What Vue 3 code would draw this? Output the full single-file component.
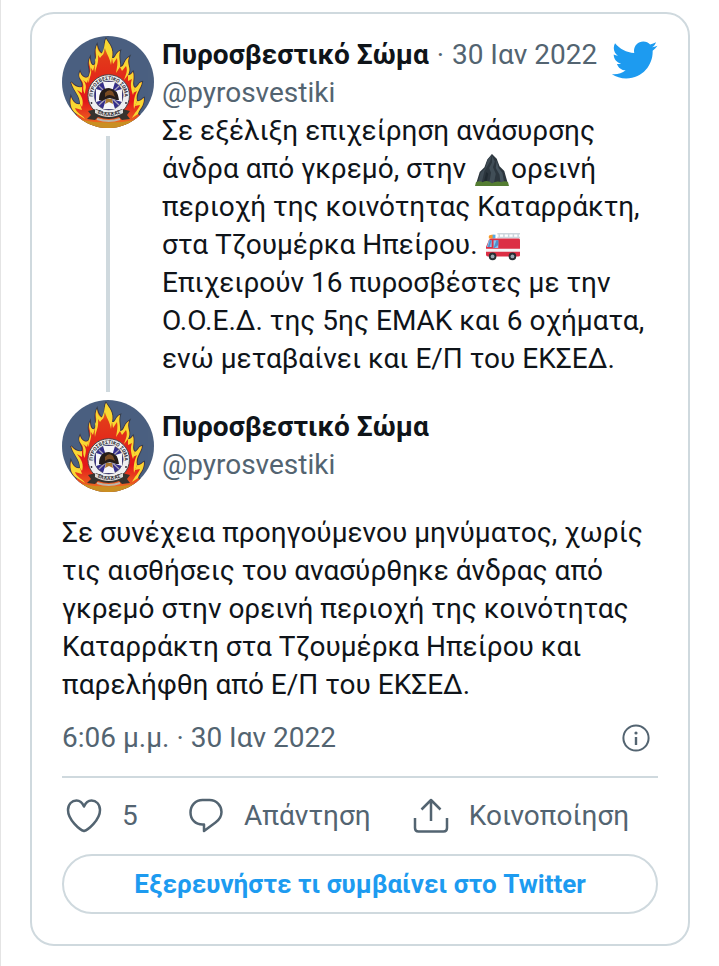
<script setup>
import { ref } from 'vue'

const liked = ref(false)
const likes = ref(5)

const author = {
  name: 'Πυροσβεστικό Σώμα',
  handle: '@pyrosvestiki'
}

function toggleLike() {
  liked.value = !liked.value
  likes.value += liked.value ? 1 : -1
}
</script>

<template>
  <main class="page">
    <!-- Shared avatar artwork -->
    <svg class="defs" aria-hidden="true">
      <defs>
        <linearGradient id="flame-red" x1="0" y1="0" x2="0" y2="1">
          <stop offset="0" stop-color="#f0a020" />
          <stop offset="0.2" stop-color="#e23a1a" />
          <stop offset="0.7" stop-color="#e3161a" />
          <stop offset="1" stop-color="#ef7a22" />
        </linearGradient>
        <path id="ring-top" d="M32.500 66.500A15.800 15.800 0 1 1 61 66.500" />
        <path id="ring-bottom" d="M34 74Q47 82 60 74" />
        <symbol id="avatar" viewBox="0 0 92 92">
          <rect width="92" height="92" fill="#4b6080" />
          <path
            d="M14 92C12 86 12 81 15 78C11 76 7 70 9 61C11 66 14 69 18 68C19 59 12 56 9 46C13 51 18 52 20 51C23 46 15 43 18 36C20 42 25 43 27 40C30 34 24 29 28 22C28 28 31 31 33 28C36 22 31 17 35 9C36 14 39 18 41 17C45 13 41 9 44 3C47 8 52 12 50 22C54 23 53 17 58 15C56 21 59 27 58 31C63 31 61 25 67 21C64 28 70 32 66 39C68 40 70 37 71 36C73 43 69 49 73 52C77 50 76 47 80 46C79 53 73 57 75 65C78 66 80 63 82 62C82 71 77 73 76 78C80 80 83 86 78 92Z"
            fill="#2b2420"
            stroke="#2b2420"
            stroke-width="2"
            opacity="0.55"
          />
          <path
            d="M14 92C12 86 12 81 15 78C11 76 7 70 9 61C11 66 14 69 18 68C19 59 12 56 9 46C13 51 18 52 20 51C23 46 15 43 18 36C20 42 25 43 27 40C30 34 24 29 28 22C28 28 31 31 33 28C36 22 31 17 35 9C36 14 39 18 41 17C45 13 41 9 44 3C47 8 52 12 50 22C54 23 53 17 58 15C56 21 59 27 58 31C63 31 61 25 67 21C64 28 70 32 66 39C68 40 70 37 71 36C73 43 69 49 73 52C77 50 76 47 80 46C79 53 73 57 75 65C78 66 80 63 82 62C82 71 77 73 76 78C80 80 83 86 78 92Z"
            fill="url(#flame-red)"
          />
          <g fill="#f8d832">
            <path d="M44 3C47 8 52 12 50 22L49 29C48 22 44 17 43 12C42 16 42 20 38 20C43 14 42 8 44 3Z" />
            <path d="M35 9C35 15 39 18 41 18L38 22L36 19C37 27 34 31 33 37C32 30 34 27 33 24C36 19 32 15 35 9Z" />
            <path d="M28 22C28 28 31 31 33 28L31 35L29 32C30 39 27 41 27 47C25 43 27 40 28 36C30 31 25 28 28 22Z" />
            <path d="M18 36C20 42 25 43 27 40L25 47L21 44C26 50 23 53 23 58C20 54 22 51 21 48C21 44 15 42 18 36Z" />
            <path d="M9 46C13 51 18 52 20 51L20 57L15 54C20 60 22 65 20 71L18 68C18 59 12 56 9 46Z" />
            <path d="M9 61C11 66 14 69 18 68L20 74L13 72C15 78 20 78 23 83L15 78C11 76 7 70 9 61Z" />
            <path d="M58 15C56 21 59 27 58 31L54 37C55 31 56 27 55 22L51 28L50 22C54 23 53 17 58 15Z" />
            <path d="M67 21C64 28 70 32 66 39L62 44C64 38 66 35 64 30L60 35L58 31C63 31 61 25 67 21Z" />
            <path d="M71 36C73 43 69 49 73 52L71 59C69 53 68 48 70 43L66 45L66 39C68 40 70 37 71 36Z" />
            <path d="M80 46C79 53 73 57 75 65L72 73C71 65 73 59 75 55L71 57L73 52C77 50 76 47 80 46Z" />
            <path d="M82 62C82 71 77 73 76 78L70 82C73 76 76 74 78 69L73 70L75 65C78 66 80 63 82 62Z" />
          </g>
          <path d="M14 83Q46 90 79 83L80 92H12Z" fill="#c98f22" />
          <circle cx="46.700" cy="59.500" r="20.800" fill="#eeeef0" stroke="#4d4548" stroke-width="1" />
          <circle cx="46.700" cy="59.500" r="14.500" fill="#352f8c" stroke="#55555d" stroke-width="0.600" />
          <path
            d="M41 46H53L50 56L60 53V66L50 63L53 73H41L44 63L34 66V53L44 56Z"
            fill="#f6f6f9"
          />
          <path d="M37 50L57 69M57 50L37 69" stroke="#aaa5b8" stroke-width="1.200" />
          <path d="M37 64Q37 52 47 52Q56 53 57 64L54 64Q47 60 40 65Z" fill="#241c19" />
          <path d="M43 57Q47 52 51 56L53 61Q47 57 43 61Z" fill="#7b4c22" />
          <path d="M44 63L43 68L47 66L51 68L50 63Z" fill="#a9772e" />
          <text font-family="Roboto, sans-serif" font-size="5" font-weight="700" fill="#2d2b33">
            <textPath href="#ring-top" startOffset="50%" text-anchor="middle">ΠΥΡΟΣΒΕΣΤΙΚΟ ΣΩΜΑ</textPath>
          </text>
          <circle cx="29.500" cy="67" r="0.900" fill="#25232a" />
          <circle cx="64" cy="67" r="0.900" fill="#25232a" />
          <path d="M26 75L34 73Q47 80 60 73L68 75L65 79L68 83L60 84L57 81Q47 85 36 81L33 84L25 83L29 79Z" fill="#37332e" />
          <path d="M33 73Q47 81 61 73L61 77Q47 85 33 77Z" fill="#dddcda" />
          <text font-family="Roboto, sans-serif" font-size="5" font-weight="700" fill="#2d2b33">
            <textPath href="#ring-bottom" startOffset="50%" text-anchor="middle" dominant-baseline="central">ΕΛΛΑΔΑΣ</textPath>
          </text>
          <path d="M35 83Q47 87 58 83" fill="none" stroke="#bcb6a9" stroke-width="2" />
        </symbol>
      </defs>
    </svg>

    <article class="card">
      <!-- Parent tweet -->
      <section class="parent">
        <div class="thread">
          <svg class="avatar" role="img" aria-label="Πυροσβεστικό Σώμα"><use href="#avatar" /></svg>
          <span class="thread-line"></span>
        </div>
        <div class="parent-body">
          <header class="parent-head">
            <div class="byline">
              <a class="name" href="#">{{ author.name }}</a>
              <span class="muted dot"> · </span>
              <a class="muted" href="#">30 Ιαν 2022</a>
            </div>
            <a class="bird" href="#" aria-label="Twitter">
              <svg viewBox="0 0 24 24" aria-hidden="true">
                <path
                  d="M23.643 4.937c-.835.37-1.732.62-2.675.733.962-.576 1.7-1.49 2.048-2.578-.9.534-1.897.922-2.958 1.13-.85-.904-2.06-1.47-3.4-1.47-2.572 0-4.658 2.086-4.658 4.66 0 .364.042.718.12 1.06-3.873-.195-7.304-2.05-9.602-4.868-.4.69-.63 1.49-.63 2.342 0 1.616.823 3.043 2.072 3.878-.764-.025-1.482-.234-2.11-.583v.06c0 2.257 1.605 4.14 3.737 4.568-.392.106-.803.162-1.227.162-.3 0-.593-.028-.877-.082.593 1.85 2.313 3.198 4.352 3.234-1.595 1.25-3.604 1.995-5.786 1.995-.376 0-.747-.022-1.112-.065 2.062 1.323 4.51 2.093 7.14 2.093 8.57 0 13.255-7.098 13.255-13.254 0-.2-.005-.402-.014-.602.91-.658 1.7-1.477 2.323-2.41z"
                />
              </svg>
            </a>
          </header>
          <a class="handle" href="#">{{ author.handle }}</a>
          <p class="text">
            Σε εξέλιξη επιχείρηση ανάσυρσης άνδρα από γκρεμό, στην
            <svg class="emoji" viewBox="0 0 36 36" role="img" aria-label="Βουνό">
              <path d="M1 33L5 20L10 15L13 7L18 1L23 6L26 14L31 19L35 33Z" fill="#2c363e" />
              <path d="M18 1L16 9L10 19L7 32H3L6 21L11 16L13 8Z" fill="#3f4b54" />
              <path d="M18 3L21 9L19 15L22 22L20 32H15L17 21L15 16L18 10Z" fill="#414e57" />
              <path d="M23 8L25 16L29 21L31 32H27L26 23L22 16Z" fill="#46545e" />
              <path d="M12 20L14 22L12 32H9Z" fill="#202a31" />
              <path d="M0 35L1 31Q5 29 8 31Q13 28 18 32Q23 29 28 31Q32 29 35 31L36 35Z" fill="#547d32" />
            </svg>ορεινή
            περιοχή της κοινότητας Καταρράκτη, στα Τζουμέρκα Ηπείρου.
            <svg class="emoji" viewBox="0 0 36 36" role="img" aria-label="Πυροσβεστικό όχημα">
              <path d="M3 10V8Q3 6 6 6H8V10Z" fill="#f59b2d" />
              <path d="M7 6H10V10H7Z" fill="#55a9e5" />
              <path d="M12 5H36M12 9H36M14 5V9M19 5V9M24 5V9M29 5V9M34 5V9" fill="none" stroke="#ccd6dd" stroke-width="1.6" />
              <path d="M5 10H35Q36 10 36 12V28Q36 29 34 29H2Q0 29 0 27V19L3 12Q4 10 5 10Z" fill="#dc2f45" />
              <path d="M3 12H6V19H1ZM8 12H13V20H8Z" fill="#8bc7f2" />
              <path d="M4 12H6L4 19H2ZM11 12H13V17L9 20H8Z" fill="#4e91cc" />
              <path d="M0 21H36V24H0Z" fill="#f3f4f6" />
              <circle cx="7" cy="29" r="4" fill="#292f33" />
              <circle cx="7" cy="29" r="2" fill="#98a6b0" />
              <circle cx="28" cy="29" r="4" fill="#292f33" />
              <circle cx="28" cy="29" r="2" fill="#98a6b0" />
            </svg>
            Επιχειρούν 16 πυροσβέστες με την Ο.Ο.Ε.Δ. της 5ης ΕΜΑΚ και 6 οχήματα, ενώ μεταβαίνει και Ε/Π του ΕΚΣΕΔ.
          </p>
        </div>
      </section>

      <!-- Main tweet -->
      <header class="tweet-head">
        <svg class="avatar" role="img" aria-label="Πυροσβεστικό Σώμα"><use href="#avatar" /></svg>
        <div class="identity">
          <a class="name" href="#">{{ author.name }}</a>
          <a class="handle" href="#">{{ author.handle }}</a>
        </div>
      </header>

      <p class="text tweet-text">
        Σε συνέχεια προηγούμενου μηνύματος, χωρίς τις αισθήσεις του ανασύρθηκε άνδρας από γκρεμό στην ορεινή
        περιοχή της κοινότητας Καταρράκτη στα Τζουμέρκα Ηπείρου και παρελήφθη από Ε/Π του ΕΚΣΕΔ.
      </p>

      <div class="meta">
        <a class="muted" href="#">6:06 μ.μ. · 30 Ιαν 2022</a>
        <a class="info" href="#" aria-label="Πληροφορίες">
          <svg viewBox="0 0 28 28" aria-hidden="true">
            <circle cx="14" cy="14" r="12.6" fill="none" stroke="currentColor" stroke-width="2" />
            <circle cx="14" cy="9" r="1.6" fill="currentColor" />
            <path d="M14 13V21" stroke="currentColor" stroke-width="2.4" />
          </svg>
        </a>
      </div>

      <div class="actions">
        <button class="action" type="button" :aria-pressed="liked" aria-label="Μου αρέσει" @click="toggleLike">
          <svg viewBox="0 0 36 36" aria-hidden="true">
            <path d="M18 33C14 32 2 22 2 12C2 6 6 2.500 10.500 2.500C14 2.500 16.500 5 18 8.500C19.500 5 22 2.500 25.500 2.500C30 2.500 34 6 34 12C34 22 22 32 18 33Z" />
          </svg>
          <span class="count">{{ likes }}</span>
        </button>
        <a class="action" href="#">
          <svg viewBox="0 0 36 36" aria-hidden="true">
            <path d="M16 26.500H14.500C7.500 26.500 2.500 21.500 2.500 14.500C2.500 7.500 7.500 2 14.500 2H21.500C28.500 2 33.500 7.500 33.500 14C33.500 18.500 31 22 27.500 24.500L16 33V26.500Z" />
          </svg>
          <span>Απάντηση</span>
        </a>
        <button class="action" type="button">
          <svg viewBox="0 0 36 36" aria-hidden="true">
            <path d="M18 23V2M8.500 11.500L18 2L27.500 11.500M2 20V30Q2 33.500 5.500 33.500H30.500Q34 33.500 34 30V20" />
          </svg>
          <span>Κοινοποίηση</span>
        </button>
      </div>

      <a class="explore" href="#">Εξερευνήστε τι συμβαίνει στο Twitter</a>
    </article>
  </main>
</template>

<style>
body {
  margin: 0;
  background: #fff;
}
</style>

<style scoped>
.page {
  box-sizing: border-box;
  min-height: 100vh;
  padding: 12px 29px 20px;
  border-left: 1px solid #e4e4e4;
  font-family: Roboto, 'Noto Sans', sans-serif;
  font-size: 28px;
  line-height: 38px;
  color: #0f1419;
}

.defs {
  position: absolute;
  width: 0;
  height: 0;
}

a {
  color: inherit;
  text-decoration: none;
}

/* ── Card ── */
.card {
  padding: 22px 30px 30px;
  border: 2px solid #cfd9de;
  border-radius: 24px;
}

.avatar {
  display: block;
  flex: none;
  width: 92px;
  height: 92px;
  border-radius: 50%;
}

.name {
  font-weight: 700;
}

.muted,
.handle {
  color: #536471;
}

.handle {
  display: block;
}

.text {
  margin: 0;
}

/* ── Parent tweet ── */
.parent {
  display: flex;
  gap: 8px;
  margin-bottom: 8px;
}

.thread {
  display: flex;
  flex-direction: column;
  align-items: center;
  gap: 8px;
}

.thread-line {
  flex: 1;
  width: 4px;
  background: #cfd9de;
}

.parent-body {
  flex: 1;
  min-width: 0;
  padding-bottom: 14px;
}

.parent-head {
  display: flex;
  justify-content: space-between;
  height: 38px;
}

.byline {
  white-space: nowrap;
}

.dot {
  padding: 0 1px;
}

.bird svg {
  display: block;
  width: 48px;
  height: 48px;
  fill: #1d9bf0;
}

.emoji {
  width: 34px;
  height: 34px;
  margin: -4px 2px;
  vertical-align: -5px;
}

/* ── Main tweet ── */
.tweet-head {
  display: flex;
  align-items: center;
  gap: 8px;
}

.identity {
  display: flex;
  flex-direction: column;
}

.tweet-text {
  margin-top: 22px;
}

.meta {
  display: flex;
  align-items: center;
  justify-content: space-between;
  margin-top: 15px;
  padding: 0 8px 19px 0;
  border-bottom: 2px solid #cfd9de;
}

.info svg {
  display: block;
  width: 28px;
  height: 28px;
  color: #536471;
}

/* ── Actions ── */
.actions {
  display: flex;
  gap: 42px;
  padding: 19px 4px;
}

.action {
  display: flex;
  align-items: center;
  gap: 20px;
  padding: 0;
  border: 0;
  background: none;
  font: inherit;
  color: #536471;
  cursor: pointer;
}

.action svg {
  width: 36px;
  height: 36px;
  fill: none;
  stroke: currentColor;
  stroke-width: 2.5;
  stroke-linejoin: round;
}

.count {
  min-width: 24px;
  text-align: left;
}

.explore {
  display: block;
  padding: 9px 20px;
  border: 2px solid #cfd9de;
  border-radius: 30px;
  font-size: 26px;
  font-weight: 700;
  text-align: center;
  color: #1d9bf0;
}
</style>
